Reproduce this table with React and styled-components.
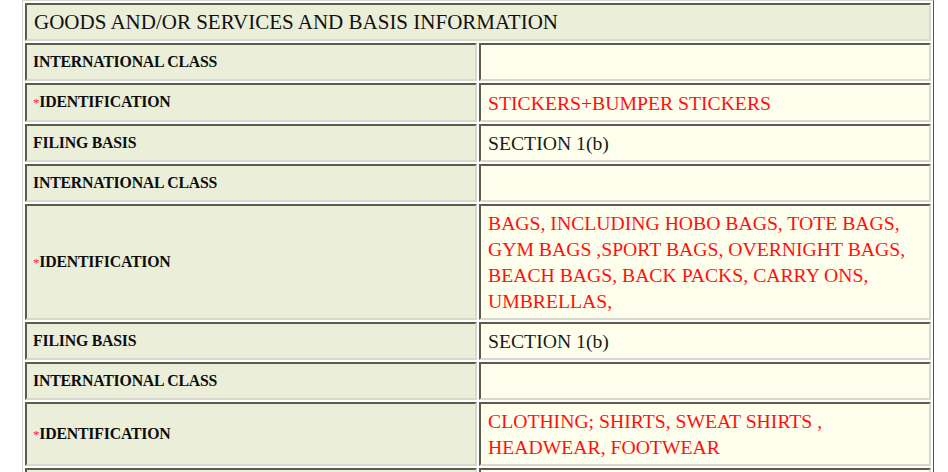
import React from 'react'
import styled, { createGlobalStyle } from 'styled-components'

const GlobalStyle = createGlobalStyle`
  html, body {
    margin: 0;
    padding: 0;
    background: #ffffff;
  }
  body {
    font-family: "Liberation Serif", "Times New Roman", serif;
    overflow: hidden;
  }
`

const Page = styled.div`
  width: 948px;
  height: 472px;
  padding-left: 22px;
  box-sizing: border-box;
  overflow: hidden;
`

const Table = styled.table`
  width: 912px;
  border-collapse: separate;
  border-spacing: 2px;
  border: 1px solid;
  border-color: #d6d6cc #55554a #55554a #d6d6cc;
  table-layout: fixed;
`

const Cell = styled.td`
  border: 2px solid;
  border-color: #5c5c4e #d8d8cf #d8d8cf #5c5c4e;
  padding: 4px 6px;
  line-height: 26px;
  vertical-align: middle;
`

const HeaderCell = styled(Cell)`
  background: #ebeed9;
  padding: 4px 7px;
  font-size: 21px;
  color: #111;
`

const Label = styled(Cell)`
  width: 439px;
  background: #ebeed9;
  font-size: 15.8px;
  font-weight: bold;
  color: #0c0c0c;
  letter-spacing: -0.2px;
`

const Value = styled(Cell)`
  background: #fefeec;
  font-size: 19.7px;
  color: ${(p) => (p.$red ? '#ff1010' : '#1a1a1a')};
  padding-left: 7px;
`

const Star = styled.span`
  color: #ff2020;
  font-weight: normal;
  font-size: 13px;
`

const rows = [
  { label: 'INTERNATIONAL CLASS', value: '' },
  { label: 'IDENTIFICATION', required: true, value: 'STICKERS+BUMPER STICKERS', red: true },
  { label: 'FILING BASIS', value: 'SECTION 1(b)' },
  { label: 'INTERNATIONAL CLASS', value: '' },
  {
    label: 'IDENTIFICATION',
    required: true,
    value: [
      'BAGS, INCLUDING HOBO BAGS, TOTE BAGS,',
      'GYM BAGS ,SPORT BAGS, OVERNIGHT BAGS,',
      'BEACH BAGS, BACK PACKS, CARRY ONS,',
      'UMBRELLAS,',
    ],
    red: true,
  },
  { label: 'FILING BASIS', value: 'SECTION 1(b)' },
  { label: 'INTERNATIONAL CLASS', value: '' },
  {
    label: 'IDENTIFICATION',
    required: true,
    value: ['CLOTHING; SHIRTS, SWEAT SHIRTS ,', 'HEADWEAR, FOOTWEAR'],
    red: true,
  },
  { label: 'FILING BASIS', value: 'SECTION 1(b)' },
]

const renderValue = (value) => {
  if (!Array.isArray(value)) return value || '\u00a0'
  return value.map((line, i) => (
    <React.Fragment key={i}>
      {line}
      {i < value.length - 1 && <br />}
    </React.Fragment>
  ))
}

const App = () => {
  return (
    <Page>
      <GlobalStyle />
      <Table>
        <tbody>
          <tr>
            <HeaderCell colSpan={2}>GOODS AND/OR SERVICES AND BASIS INFORMATION</HeaderCell>
          </tr>
          {rows.map((row, i) => (
            <tr key={i}>
              <Label>
                {row.required && <Star>*</Star>}
                {row.label}
              </Label>
              <Value $red={row.red}>{renderValue(row.value)}</Value>
            </tr>
          ))}
        </tbody>
      </Table>
    </Page>
  )
}

export default App
